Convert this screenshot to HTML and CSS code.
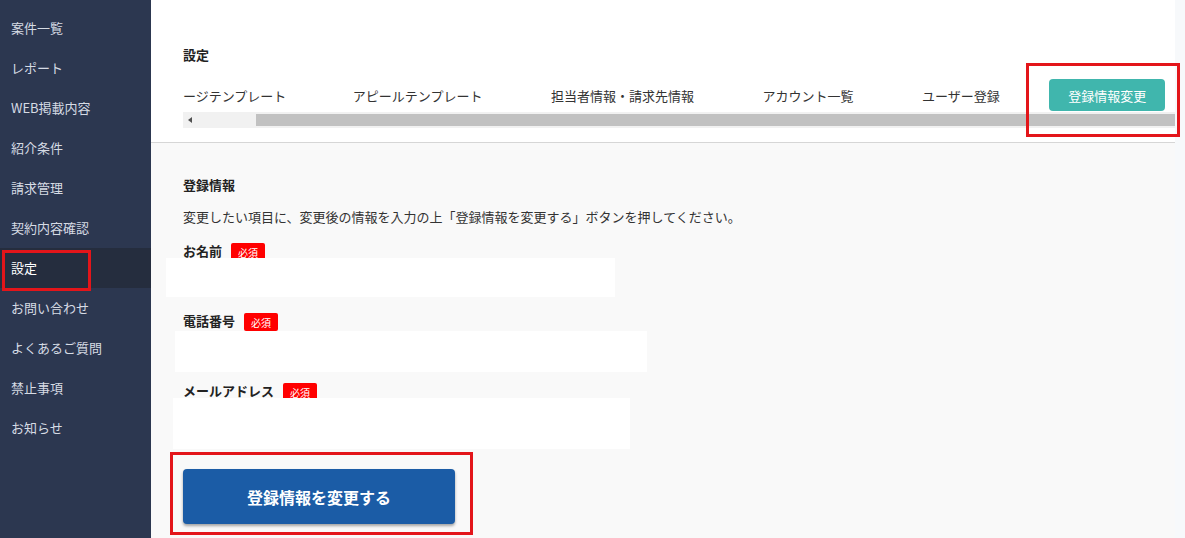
FILE: index.html
```html
<!DOCTYPE html>
<html lang="ja">
<head>
<meta charset="utf-8">
<title>設定 - 登録情報変更</title>
<link rel="stylesheet" href="styles.css">
</head>
<body>
<div class="app">
  <nav class="sidebar">
    <a class="nav-item">案件一覧</a>
    <a class="nav-item">レポート</a>
    <a class="nav-item">WEB掲載内容</a>
    <a class="nav-item">紹介条件</a>
    <a class="nav-item">請求管理</a>
    <a class="nav-item">契約内容確認</a>
    <a class="nav-item is-active">設定</a>
    <a class="nav-item">お問い合わせ</a>
    <a class="nav-item">よくあるご質問</a>
    <a class="nav-item">禁止事項</a>
    <a class="nav-item">お知らせ</a>
  </nav>
  <main class="main">
    <header class="header">
      <h1 class="page-title">設定</h1>
      <div class="tabs">
        <span class="tab tab-first">ージテンプレート</span>
        <span class="tab">アピールテンプレート</span>
        <span class="tab">担当者情報・請求先情報</span>
        <span class="tab">アカウント一覧</span>
        <span class="tab">ユーザー登録</span>
        <span class="tab tab-active">登録情報変更</span>
      </div>
      <div class="hscroll">
        <span class="hscroll-arrow"></span>
        <span class="hscroll-thumb"></span>
      </div>
    </header>
    <section class="content">
      <h2 class="section-title">登録情報</h2>
      <p class="desc">変更したい項目に、変更後の情報を入力の上「登録情報を変更する」ボタンを押してください。</p>

      <div class="field field-name">
        <div class="label-row"><span class="label">お名前</span><span class="badge">必須</span></div>
        <div class="input"></div>
      </div>
      <div class="field field-tel">
        <div class="label-row"><span class="label">電話番号</span><span class="badge">必須</span></div>
        <div class="input"></div>
      </div>
      <div class="field field-mail">
        <div class="label-row"><span class="label">メールアドレス</span><span class="badge">必須</span></div>
        <div class="input"></div>
      </div>

      <div class="submit-wrap">
        <button class="submit">登録情報を変更する</button>
      </div>
    </section>
  </main>
</div>
</body>
</html>
```
FILE: styles.css
```css
* { box-sizing: border-box; }
html, body { margin: 0; padding: 0; }
body {
  width: 1185px;
  height: 538px;
  overflow: hidden;
  background: #f7f9fb;
  font-family: "Noto Sans CJK JP", "Noto Sans", sans-serif;
  color: #222;
}
.app {
  display: flex;
  height: 538px;
}
.sidebar {
  flex: 0 0 151px;
  background: #2c3750;
  display: flex;
  flex-direction: column;
  padding-top: 8px;
}
.nav-item {
  display: flex;
  align-items: center;
  height: 40px;
  padding-left: 11px;
  padding-bottom: 2px;
  font-size: 13px;
  color: #d6dbe4;
  position: relative;
}
.nav-item.is-active {
  background: #252d3e;
  color: #ffffff;
}
.nav-item.is-active::after {
  content: "";
  position: absolute;
  left: 2px;
  top: 2px;
  width: 83px;
  height: 35px;
  border: 3px solid #e3151a;
}
.main {
  flex: 0 0 1024px;
  background: #f9f9f9;
}
.header {
  background: #ffffff;
  padding: 45px 0 14px 32px;
  border-bottom: 1px solid #d6d6d6;
}
.page-title {
  margin: 0;
  font-size: 13px;
  font-weight: 700;
  line-height: 20px;
  color: #222;
}
.tabs {
  margin-top: 14px;
  display: flex;
  align-items: center;
  height: 32px;
}
.tab {
  font-size: 13px;
  color: #333;
  white-space: nowrap;
  margin-right: 68.5px;
}
.tab-first {
  margin-right: 66.5px;
}
.tab-active {
  margin-left: -19px;
  margin-right: 0;
  height: 32px;
  padding: 0 19px;
  display: flex;
  align-items: center;
  background: #40b6ad;
  color: #fff;
  border-radius: 4px;
  position: relative;
}
.tab-active::after {
  content: "";
  position: absolute;
  left: -23px;
  top: -16px;
  right: -15px;
  bottom: -26px;
  border: 3px solid #e3151a;
  pointer-events: none;
}
.hscroll {
  margin-top: 1px;
  height: 16px;
  background: #f1f1f1;
  display: flex;
  align-items: center;
}
.hscroll-arrow {
  width: 73px;
  height: 16px;
  position: relative;
}
.hscroll-arrow::before {
  content: "";
  position: absolute;
  left: 5px;
  top: 5px;
  border-style: solid;
  border-width: 3px 4px 3px 0;
  border-color: transparent #505050 transparent transparent;
}
.hscroll-thumb {
  flex: 1;
  height: 12px;
  background: #c1c1c1;
}
.content {
  padding: 32px 0 0 32px;
}
.section-title {
  margin: 0;
  font-size: 13px;
  font-weight: 700;
  line-height: 20px;
  color: #222;
}
.desc {
  margin: 12px 0 0;
  font-size: 13px;
  line-height: 20px;
  color: #333;
}
.label-row {
  display: flex;
  align-items: center;
  gap: 9px;
  height: 20px;
}
.label {
  font-size: 13px;
  font-weight: 700;
  color: #222;
  line-height: 20px;
}
.badge {
  display: flex;
  align-items: center;
  justify-content: center;
  width: 34px;
  height: 18px;
  margin-top: 2px;
  background: #ff0000;
  color: #fff;
  font-size: 10px;
  border-radius: 2px;
}
.input {
  position: relative;
  background: #ffffff;
}
.field-name { margin-top: 14px; }
.field-name .input { margin: -3px 0 0 -17px; width: 449px; height: 39px; }
.field-tel { margin-top: 14px; }
.field-tel .input { margin: 0 0 0 -8px; width: 472px; height: 41px; }
.field-mail { margin-top: 9px; }
.field-mail .input { margin: -3px 0 0 -10px; width: 457px; height: 51px; }
.submit-wrap {
  margin-top: 20px;
  position: relative;
  width: 272px;
}
.submit-wrap::after {
  content: "";
  position: absolute;
  left: -13px;
  top: -17px;
  right: -18px;
  bottom: -11px;
  border: 3px solid #e3151a;
  pointer-events: none;
}
.submit {
  display: flex;
  align-items: center;
  justify-content: center;
  width: 272px;
  height: 55px;
  border: none;
  border-radius: 4px;
  background: #1b5ca6;
  color: #fff;
  font-family: inherit;
  font-size: 16px;
  font-weight: 700;
  box-shadow: 0 2px 3px rgba(0,0,0,0.35);
}
```
